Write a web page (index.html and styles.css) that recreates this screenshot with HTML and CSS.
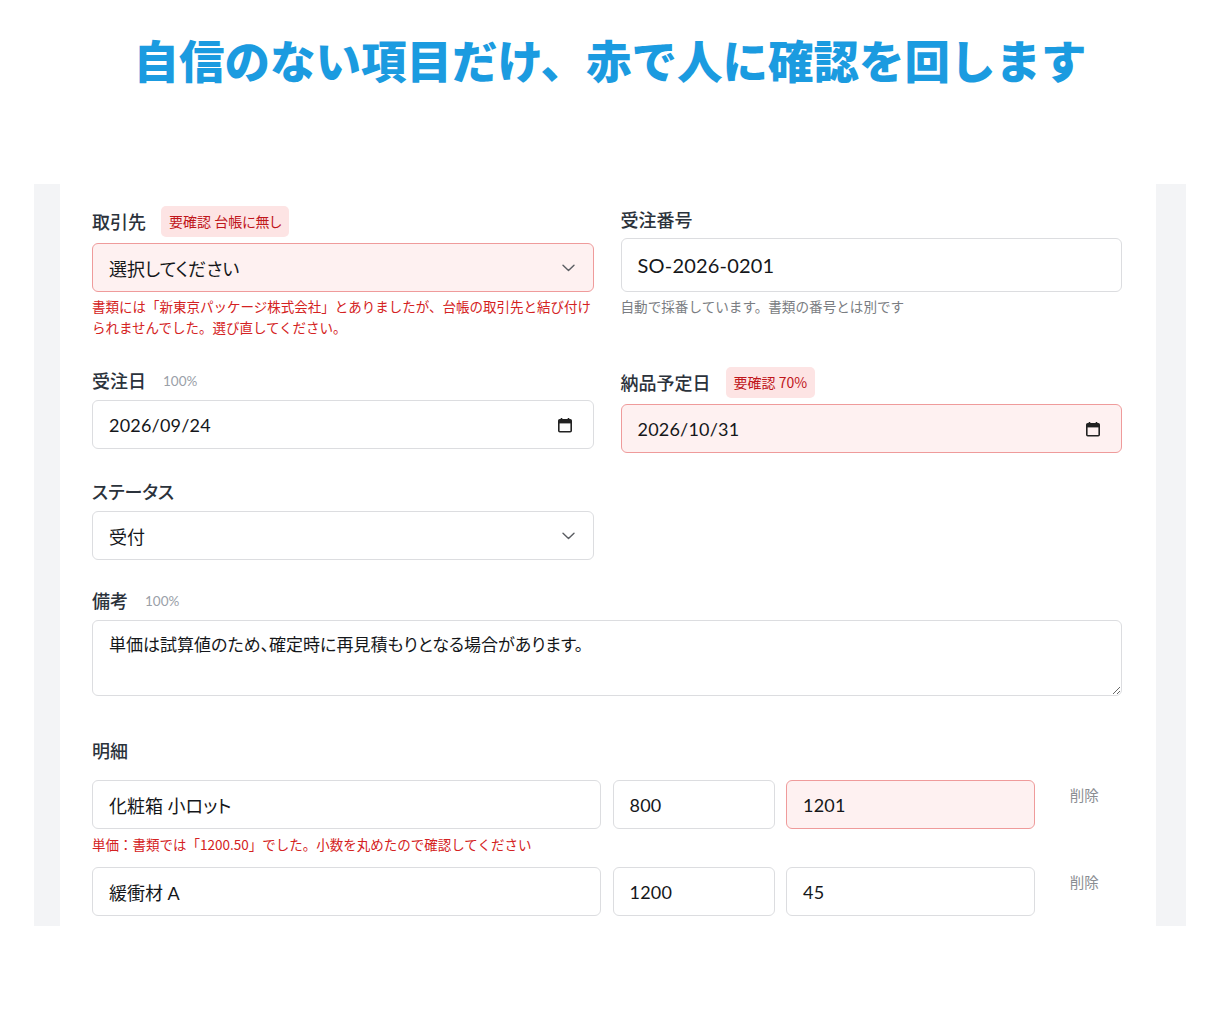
FILE: index.html
```html
<!DOCTYPE html>
<html lang="ja">
<head>
<meta charset="utf-8">
<title>確認フォーム</title>
<link rel="stylesheet" href="styles.css">
</head>
<body>
<header class="hero">
  <h1 class="hero-title">自信のない項目だけ、赤で人に確認を回します</h1>
</header>
<section class="panel">
  <div class="card">
    <div class="form-grid">
      <div class="field">
        <div class="label-row"><span class="label">取引先</span><span class="badge">要確認 台帳に無し</span></div>
        <div class="control control-warn">
          <span class="control-text">選択してください</span>
          <svg class="chev" width="13" height="8" viewBox="0 0 13 8"><path d="M1 1.2l5.5 5.3 5.5-5.3" fill="none" stroke="#5a5d62" stroke-width="1.4" stroke-linecap="round" stroke-linejoin="round"/></svg>
        </div>
        <p class="error-text field-error">書類には「新東京パッケージ株式会社」とありましたが、台帳の取引先と結び付けられませんでした。選び直してください。</p>
      </div>
      <div class="field">
        <div class="label-row"><span class="label">受注番号</span></div>
        <div class="control control-lg">
          <span class="control-text num">SO-2026-0201</span>
        </div>
        <p class="help-text">自動で採番しています。書類の番号とは別です</p>
      </div>

      <div class="field">
        <div class="label-row"><span class="label">受注日</span><span class="conf">100%</span></div>
        <div class="control">
          <span class="control-text num">2026/09/24</span>
          <svg class="cal" width="16" height="16" viewBox="0 0 16 16"><path d="M4.5 1v3M11.5 1v3" stroke="#222" stroke-width="1.6"/><rect x="1.8" y="2.8" width="12.4" height="12" rx="1" fill="none" stroke="#222" stroke-width="1.6"/><rect x="1.8" y="2.8" width="12.4" height="3.6" fill="#222"/></svg>
        </div>
      </div>
      <div class="field">
        <div class="label-row"><span class="label">納品予定日</span><span class="badge">要確認 70%</span></div>
        <div class="control control-warn">
          <span class="control-text num">2026/10/31</span>
          <svg class="cal" width="16" height="16" viewBox="0 0 16 16"><path d="M4.5 1v3M11.5 1v3" stroke="#222" stroke-width="1.6"/><rect x="1.8" y="2.8" width="12.4" height="12" rx="1" fill="none" stroke="#222" stroke-width="1.6"/><rect x="1.8" y="2.8" width="12.4" height="3.6" fill="#222"/></svg>
        </div>
      </div>

      <div class="field">
        <div class="label-row"><span class="label">ステータス</span></div>
        <div class="control">
          <span class="control-text">受付</span>
          <svg class="chev" width="13" height="8" viewBox="0 0 13 8"><path d="M1 1.2l5.5 5.3 5.5-5.3" fill="none" stroke="#5a5d62" stroke-width="1.4" stroke-linecap="round" stroke-linejoin="round"/></svg>
        </div>
      </div>
      <div class="field"></div>

      <div class="field field-wide">
        <div class="label-row"><span class="label">備考</span><span class="conf">100%</span></div>
        <textarea class="textarea" readonly>単価は試算値のため、確定時に再見積もりとなる場合があります。</textarea>
      </div>
    </div>

    <div class="items">
      <h2 class="label items-title">明細</h2>
      <div class="item-grid">
        <div class="control"><span class="control-text">化粧箱 小ロット</span></div>
        <div class="control"><span class="control-text num">800</span></div>
        <div class="control control-warn"><span class="control-text num">1201</span></div>
        <button class="del" type="button">削除</button>
        <p class="error-text item-error">単価：書類では「1200.50」でした。小数を丸めたので確認してください</p>
      </div>
      <div class="item-grid">
        <div class="control"><span class="control-text">緩衝材 A</span></div>
        <div class="control"><span class="control-text num">1200</span></div>
        <div class="control"><span class="control-text num">45</span></div>
        <button class="del" type="button">削除</button>
      </div>
    </div>
  </div>
</section>
</body>
</html>
```
FILE: styles.css
```css
* { box-sizing: border-box; }
html, body { margin: 0; padding: 0; background: #fff; }
body {
  font-family: "Lato", "Noto Sans CJK JP", sans-serif;
  color: #1f2328;
  font-feature-settings: "palt";
}
.hero {
  height: 184px;
  padding-top: 30px;
  text-align: center;
}
.hero-title {
  margin: 0;
  font-family: "Noto Sans CJK JP", sans-serif;
  font-weight: 900;
  font-size: 45.5px;
  line-height: 58px;
  color: #1b9be0;
  font-feature-settings: normal;
  letter-spacing: 0;
}
.panel {
  margin: 0 34px;
  height: 742px;
  background: #f3f4f6;
  overflow: hidden;
  padding: 0 30px 0 26px;
}
.card {
  background: #fff;
  min-height: 100%;
  padding: 22px 34px 40px 32px;
}
.form-grid {
  display: grid;
  grid-template-columns: 1fr 1fr;
  column-gap: 27px;
  row-gap: 25px;
}
.field-wide { grid-column: 1 / -1; margin-top: 2px; }
.label-row {
  display: flex;
  align-items: center;
  min-height: 27px;
  margin-bottom: 6px;
}
.label {
  font-family: "Noto Sans CJK JP", sans-serif;
  font-size: 18px;
  font-weight: 500;
  color: #2b323b;
  line-height: 25px;
  margin: 0;
}
.badge {
  margin-left: 15px;
  height: 31px;
  line-height: 31px;
  padding: 0 8px;
  border-radius: 5px;
  background: #fde4e4;
  color: #c0161b;
  font-size: 14px;
  font-family: "Noto Sans CJK JP", sans-serif;
}
.conf {
  margin-left: 17px;
  font-size: 13.5px;
  color: #9aa0a8;
  font-family: "Lato", "Noto Sans CJK JP", sans-serif;
}
.control {
  display: flex;
  align-items: center;
  justify-content: space-between;
  height: 49px;
  padding: 0 18px 0 16px;
  border: 1px solid #dcdde0;
  border-radius: 6px;
  background: #fff;
  font-size: 18px;
  color: #15171a;
}
.control-lg {
  height: 54px;
  font-size: 20px;
  margin-top: -1px;
}
.control-warn {
  background: #fef1f1;
  border-color: #ef9b9b;
}
.control-text { white-space: nowrap; }
.num { font-family: "Lato", "Noto Sans CJK JP", sans-serif; letter-spacing: 0.2px; }
.chev { flex: none; }
.cal { flex: none; margin-right: 2px; }
.error-text {
  margin: 4px 0 0;
  font-size: 13.5px;
  line-height: 21px;
  color: #d42222;
  font-family: "Noto Sans CJK JP", sans-serif;
  font-feature-settings: normal;
}
.field-error { margin-bottom: 4px; }
.help-text {
  margin: 4px 0 0;
  font-size: 13.6px;
  line-height: 21px;
  color: #7a7d82;
  font-family: "Noto Sans CJK JP", sans-serif;
  font-feature-settings: normal;
}
.textarea {
  display: block;
  width: 100%;
  height: 76px;
  padding: 10px 16px;
  border: 1px solid #dcdde0;
  border-radius: 6px;
  font-family: "Noto Sans CJK JP", sans-serif;
  font-feature-settings: "palt";
  font-size: 17px;
  line-height: 26px;
  color: #15171a;
  resize: vertical;
  outline: none;
}
.items { margin-top: 42px; }
.items-title { margin-bottom: 17px; }
.item-grid {
  display: grid;
  grid-template-columns: 509px 162px 249px 1fr;
  column-gap: 11.5px;
  align-items: start;
  margin-bottom: 12px;
}
.item-error { grid-column: 1 / -1; margin-top: 5px; }
.del {
  justify-self: center;
  margin-top: 6px;
  padding: 0 6px;
  border: 0;
  background: transparent;
  font-family: "Noto Sans CJK JP", sans-serif;
  font-size: 14.5px;
  line-height: 18px;
  color: #8a8d92;
  cursor: pointer;
}
```
